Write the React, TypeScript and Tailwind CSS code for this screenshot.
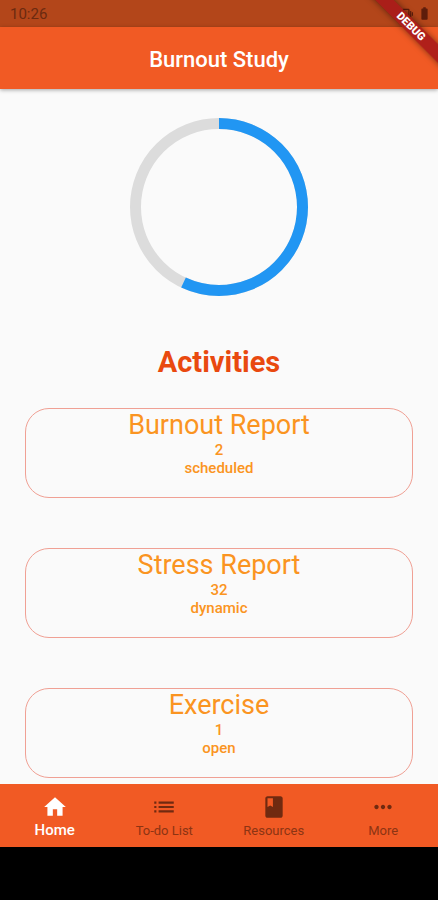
import { MdBatteryFull, MdBook, MdHome, MdList, MdMoreHoriz, MdVibration } from 'react-icons/md';

const activities = [
  { title: 'Burnout Report', count: 2, kind: 'scheduled' },
  { title: 'Stress Report', count: 32, kind: 'dynamic' },
  { title: 'Exercise', count: 1, kind: 'open' },
];

const tabs = [
  { label: 'Home', icon: MdHome },
  { label: 'To-do List', icon: MdList },
  { label: 'Resources', icon: MdBook },
  { label: 'More', icon: MdMoreHoriz },
];

function StatusBar() {
  return (
    <div className="flex h-[27px] shrink-0 items-center justify-between bg-[#b3461a] pl-2.5 pr-1.5 text-[#6b2a10]">
      <span className="pt-0.5 text-[15px]">10:26</span>
      <div className="flex items-center gap-1 text-[#5e1d0b]">
        <MdVibration size={14} />
        <MdBatteryFull size={15} />
      </div>
    </div>
  );
}

function DebugBanner() {
  return (
    <div className="pointer-events-none absolute right-0 top-0 z-20 h-20 w-20 overflow-hidden">
      <div className="absolute -right-7 top-5 flex h-[13px] w-[110px] rotate-45 items-center justify-center bg-[#a81a1a]/90 text-[11px] font-black leading-none text-white shadow-[0_0_6px_rgba(0,0,0,0.5)]">
        DEBUG
      </div>
    </div>
  );
}

function ProgressRing({ percent }: { percent: number }) {
  return (
    <svg
      viewBox="0 0 178 178"
      className="mx-auto mt-[29px] block h-[178px] w-[178px] shrink-0 -rotate-90"
      role="img"
      aria-label="Study progress"
    >
      <circle cx="89" cy="89" r="83.5" fill="none" stroke="#dcdcdc" strokeWidth="11" />
      <circle
        cx="89"
        cy="89"
        r="83.5"
        fill="none"
        stroke="#2196f3"
        strokeWidth="11"
        pathLength={100}
        strokeDasharray={`${percent} 100`}
      />
    </svg>
  );
}

function ActivityCard({ title, count, kind }: { title: string; count: number; kind: string }) {
  return (
    <button
      type="button"
      className="flex h-[90px] w-full shrink-0 flex-col items-center rounded-3xl border border-[#f0a094] text-[#fa9421]"
    >
      <span className="text-[27px] leading-8">{title}</span>
      <span className="text-[15px] font-medium leading-[18px]">{count}</span>
      <span className="text-[15px] font-medium leading-[18px]">{kind}</span>
    </button>
  );
}

export default function App() {
  return (
    <div className="relative flex h-screen flex-col overflow-hidden bg-[#fafafa] font-[Roboto,sans-serif]">
      <StatusBar />
      <header className="z-10 flex h-[62px] shrink-0 items-center justify-center bg-[#f15a24] pt-0.5 shadow-[0_1px_4px_rgba(0,0,0,0.35)]">
        <h1 className="text-[22px] font-medium text-white">Burnout Study</h1>
      </header>

      <main className="flex min-h-0 flex-1 flex-col overflow-hidden px-[25px]">
        <ProgressRing percent={57} />
        <h2 className="mt-12 text-center text-[29px] font-bold leading-9 text-[#e9490f]">Activities</h2>
        <div className="mt-7 flex flex-col gap-[50px]">
          {activities.map((activity) => (
            <ActivityCard key={activity.title} {...activity} />
          ))}
        </div>
      </main>

      <nav className="grid h-[63px] shrink-0 grid-cols-4 bg-[#f15a24]">
        {tabs.map(({ label, icon: Icon }, index) => (
          <button
            key={label}
            type="button"
            aria-current={index === 0 ? 'page' : undefined}
            className={
              index === 0
                ? 'flex flex-col items-center pt-2.5 text-[15px] font-medium leading-5 text-white'
                : 'flex flex-col items-center pt-2.5 text-[13px] leading-[22px] text-[#8c3413]'
            }
          >
            <Icon size={26} className={index === 0 ? '' : 'text-[#702a10]'} />
            {label}
          </button>
        ))}
      </nav>
      <div className="h-[53px] shrink-0 bg-black" />

      <DebugBanner />
    </div>
  );
}
